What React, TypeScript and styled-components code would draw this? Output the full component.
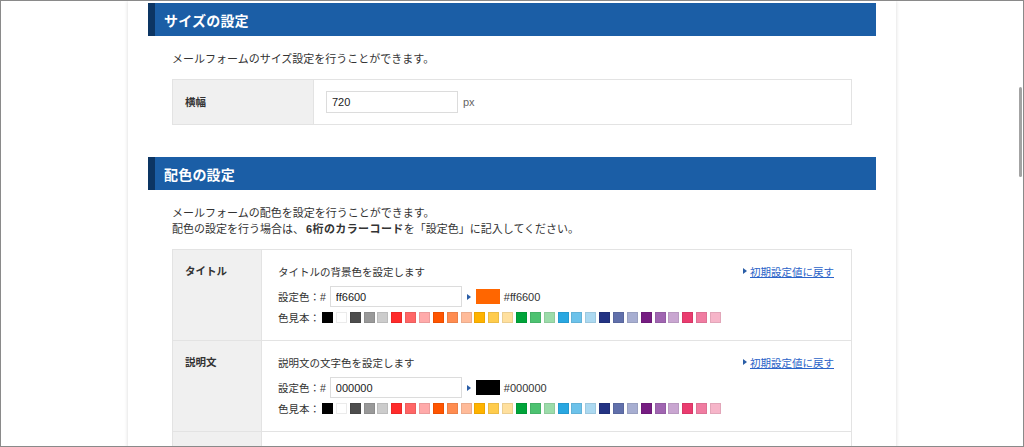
import React from 'react';
import styled, { createGlobalStyle } from 'styled-components';

const Global = createGlobalStyle`
  html, body { margin: 0; padding: 0; background: #fff; }
  body {
    font-family: "Liberation Sans", "Noto Sans CJK JP", sans-serif;
    color: #333;
  }
  * { box-sizing: border-box; }
`;

const Frame = styled.div`
  position: relative;
  width: 1024px;
  height: 447px;
  border: 1px solid #8a8a8a;
  overflow: hidden;
  background: #fff;
`;

const ScrollThumb = styled.div`
  position: absolute;
  right: 1px;
  top: 86px;
  width: 3px;
  height: 90px;
  border-radius: 2px;
  background: #a3a3a3;
`;

const Panel = styled.main`
  width: 768px;
  min-height: 100%;
  margin: 0 auto;
  padding-top: 2px;
  background: #fff;
  box-shadow: 0 0 4px rgba(0, 0, 0, 0.16);
`;

const SectionHeader = styled.h2`
  margin: 0 20px;
  height: 33px;
  display: flex;
  align-items: center;
  padding-left: 9px;
  background: #1b5ea6;
  border-left: 7px solid #0c3563;
  color: #fff;
  font-size: 14px;
  font-weight: bold;
  letter-spacing: 0.2px;
`;

const SectionBody = styled.section`
  padding: 15px 44px 32px;
`;

const Desc = styled.p`
  margin: 0;
  font-size: 11px;
  line-height: 16px;
  color: #333;
  b { font-weight: bold; margin-left: 2px; letter-spacing: 0.4px; }
`;

const Table = styled.div`
  margin-top: 12px;
  border: 1px solid #e3e3e3;
`;

const Row = styled.div<{ $label: number; $last?: boolean }>`
  display: grid;
  grid-template-columns: ${(p) => p.$label}px 1fr;
  border-bottom: ${(p) => (p.$last ? 'none' : '1px solid #e3e3e3')};
`;

const LabelCell = styled.div<{ $center?: boolean }>`
  background: #f0f0f0;
  border-right: 1px solid #e3e3e3;
  padding: ${(p) => (p.$center ? '0 12px' : '12px 12px')};
  display: flex;
  align-items: ${(p) => (p.$center ? 'center' : 'flex-start')};
  font-size: 10.5px;
  line-height: 18px;
  font-weight: bold;
  color: #333;
`;

const EmptyCell = styled.div`
  min-height: 90px;
`;

const SizeValue = styled.div`
  height: 44px;
  padding-left: 12px;
  display: flex;
  align-items: center;
  font-size: 11px;
`;

const TextInput = styled.input<{ $h: number }>`
  width: 132px;
  height: ${(p) => p.$h}px;
  border: 1px solid #dcdcdc;
  padding: 0 5px;
  font-family: "Liberation Sans", "Noto Sans CJK JP", sans-serif;
  font-size: 11px;
  color: #222;
  background: #fff;
  outline: none;
`;

const Unit = styled.span`
  margin-left: 5px;
  color: #666;
  font-size: 11px;
`;

const ColorValue = styled.div`
  padding: 12px 17px 17px 16px;
  font-size: 10.5px;
  color: #333;
`;

const TopLine = styled.div`
  display: flex;
  justify-content: space-between;
  align-items: center;
  height: 18px;
`;

const ResetLink = styled.a`
  display: flex;
  align-items: center;
  gap: 3px;
  color: #2b63c8;
  text-decoration: underline;
  cursor: pointer;
  font-size: 10.5px;
`;

const Tri = styled.span`
  display: inline-block;
  width: 0;
  height: 0;
  border-top: 3px solid transparent;
  border-bottom: 3px solid transparent;
  border-left: 4px solid #2a5da6;
`;

const SetLine = styled.div`
  margin-top: 6px;
  height: 21px;
  display: flex;
  align-items: center;
`;

const SetLabel = styled.span`
  margin-right: 4px;
`;

const Arrow = styled(Tri)`
  margin: 0 5px;
`;

const ColorBox = styled.span<{ $c: string }>`
  width: 24px;
  height: 15px;
  background: ${(p) => p.$c};
  margin-right: 4px;
`;

const HexText = styled.span`
  font-size: 11px;
  color: #333;
`;

const SwatchLine = styled.div`
  margin-top: 4px;
  height: 12px;
  display: flex;
  align-items: center;
`;

const SwatchLabel = styled.span`
  margin-right: 2px;
`;

const Swatches = styled.div`
  display: flex;
  gap: 2.86px;
`;

const Swatch = styled.span<{ $c: string }>`
  width: 11px;
  height: 11px;
  background: ${(p) => p.$c};
  box-shadow: inset 0 0 0 1px rgba(0, 0, 0, 0.08);
  cursor: pointer;
`;

const swatchColors = [
  '#000000', '#ffffff', '#4d4d4d', '#999999', '#cccccc',
  '#ff2b2b', '#ff6666', '#ffaaaa', '#ff5500', '#ff8c50',
  '#ffbb99', '#ffb300', '#ffcc4d', '#ffe09e', '#00a43a',
  '#4dc271', '#9cdcaa', '#29a7e1', '#6cc2ea', '#acd9f1',
  '#233383', '#6170ab', '#a7aed1', '#761d82', '#a065b1',
  '#c9a6d1', '#ea3c6f', '#f07ca1', '#f6b5c9',
];

type ColorRowProps = {
  label: string;
  desc: string;
  value: string;
};

const ColorRow = ({ label, desc, value }: ColorRowProps) => (
  <Row $label={89}>
    <LabelCell>{label}</LabelCell>
    <ColorValue>
      <TopLine>
        <span>{desc}</span>
        <ResetLink>
          <Tri />
          初期設定値に戻す
        </ResetLink>
      </TopLine>
      <SetLine>
        <SetLabel>設定色：#</SetLabel>
        <TextInput $h={21} defaultValue={value} />
        <Arrow />
        <ColorBox $c={'#' + value} />
        <HexText>#{value}</HexText>
      </SetLine>
      <SwatchLine>
        <SwatchLabel>色見本：</SwatchLabel>
        <Swatches>
          {swatchColors.map((c) => (
            <Swatch key={c} $c={c} />
          ))}
        </Swatches>
      </SwatchLine>
    </ColorValue>
  </Row>
);

export default function App() {
  return (
    <>
      <Global />
      <Frame>
        <Panel>
          <SectionHeader>サイズの設定</SectionHeader>
          <SectionBody>
            <Desc>メールフォームのサイズ設定を行うことができます。</Desc>
            <Table>
              <Row $label={141} $last>
                <LabelCell $center>横幅</LabelCell>
                <SizeValue>
                  <TextInput $h={22} defaultValue="720" />
                  <Unit>px</Unit>
                </SizeValue>
              </Row>
            </Table>
          </SectionBody>
          <SectionHeader>配色の設定</SectionHeader>
          <SectionBody>
            <Desc>
              メールフォームの配色を設定を行うことができます。
              <br />
              配色の設定を行う場合は、<b>6桁のカラーコード</b>を「設定色」に記入してください。
            </Desc>
            <Table>
              <ColorRow label="タイトル" desc="タイトルの背景色を設定します" value="ff6600" />
              <ColorRow label="説明文" desc="説明文の文字色を設定します" value="000000" />
              <Row $label={89} $last>
                <LabelCell />
                <EmptyCell />
              </Row>
            </Table>
          </SectionBody>
        </Panel>
        <ScrollThumb />
      </Frame>
    </>
  );
}
